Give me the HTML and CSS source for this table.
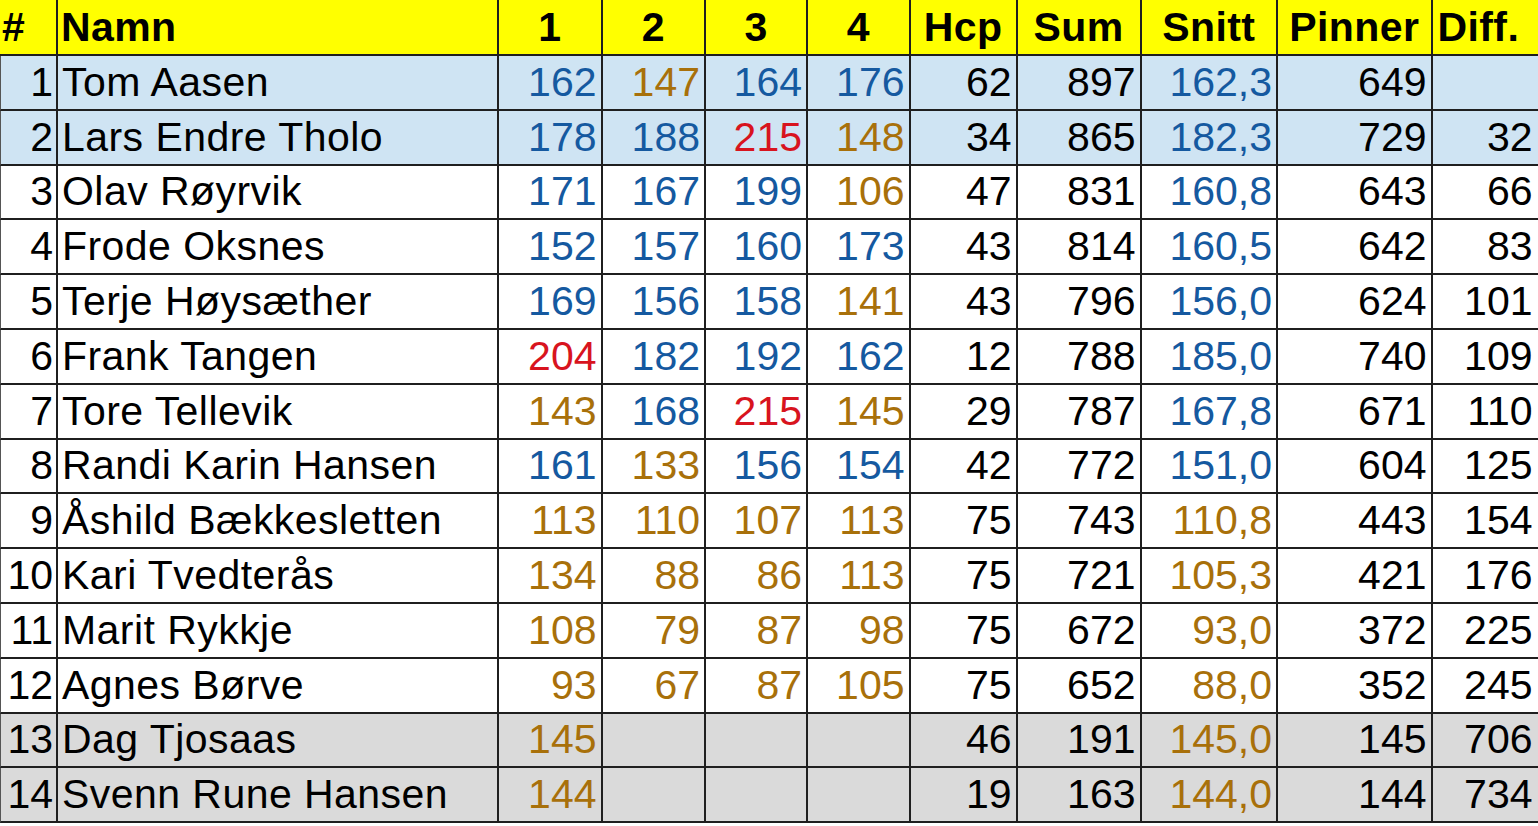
FILE: index.html
```html
<!DOCTYPE html>
<html lang="no">
<head>
<meta charset="utf-8">
<title>Resultatliste</title>
<link rel="stylesheet" href="styles.css">
</head>
<body>
<div class="table">
  <div class="row head">
    <div class="c l">#</div><div class="c l">Namn</div><div class="c m">1</div><div class="c m">2</div><div class="c m">3</div><div class="c m">4</div><div class="c m">Hcp</div><div class="c m">Sum</div><div class="c m">Snitt</div><div class="c m">Pinner</div><div class="c m">Diff.</div>
  </div>
  <div class="row blue">
    <div class="c">1</div><div class="c n">Tom Aasen</div><div class="c b">162</div><div class="c g">147</div><div class="c b">164</div><div class="c b">176</div><div class="c">62</div><div class="c">897</div><div class="c b">162,3</div><div class="c">649</div><div class="c"></div>
  </div>
  <div class="row blue">
    <div class="c">2</div><div class="c n">Lars Endre Tholo</div><div class="c b">178</div><div class="c b">188</div><div class="c r">215</div><div class="c g">148</div><div class="c">34</div><div class="c">865</div><div class="c b">182,3</div><div class="c">729</div><div class="c">32</div>
  </div>
  <div class="row">
    <div class="c">3</div><div class="c n">Olav Røyrvik</div><div class="c b">171</div><div class="c b">167</div><div class="c b">199</div><div class="c g">106</div><div class="c">47</div><div class="c">831</div><div class="c b">160,8</div><div class="c">643</div><div class="c">66</div>
  </div>
  <div class="row">
    <div class="c">4</div><div class="c n">Frode Oksnes</div><div class="c b">152</div><div class="c b">157</div><div class="c b">160</div><div class="c b">173</div><div class="c">43</div><div class="c">814</div><div class="c b">160,5</div><div class="c">642</div><div class="c">83</div>
  </div>
  <div class="row">
    <div class="c">5</div><div class="c n">Terje Høysæther</div><div class="c b">169</div><div class="c b">156</div><div class="c b">158</div><div class="c g">141</div><div class="c">43</div><div class="c">796</div><div class="c b">156,0</div><div class="c">624</div><div class="c">101</div>
  </div>
  <div class="row">
    <div class="c">6</div><div class="c n">Frank Tangen</div><div class="c r">204</div><div class="c b">182</div><div class="c b">192</div><div class="c b">162</div><div class="c">12</div><div class="c">788</div><div class="c b">185,0</div><div class="c">740</div><div class="c">109</div>
  </div>
  <div class="row">
    <div class="c">7</div><div class="c n">Tore Tellevik</div><div class="c g">143</div><div class="c b">168</div><div class="c r">215</div><div class="c g">145</div><div class="c">29</div><div class="c">787</div><div class="c b">167,8</div><div class="c">671</div><div class="c">110</div>
  </div>
  <div class="row">
    <div class="c">8</div><div class="c n">Randi Karin Hansen</div><div class="c b">161</div><div class="c g">133</div><div class="c b">156</div><div class="c b">154</div><div class="c">42</div><div class="c">772</div><div class="c b">151,0</div><div class="c">604</div><div class="c">125</div>
  </div>
  <div class="row">
    <div class="c">9</div><div class="c n">Åshild Bækkesletten</div><div class="c g">113</div><div class="c g">110</div><div class="c g">107</div><div class="c g">113</div><div class="c">75</div><div class="c">743</div><div class="c g">110,8</div><div class="c">443</div><div class="c">154</div>
  </div>
  <div class="row">
    <div class="c">10</div><div class="c n">Kari Tvedterås</div><div class="c g">134</div><div class="c g">88</div><div class="c g">86</div><div class="c g">113</div><div class="c">75</div><div class="c">721</div><div class="c g">105,3</div><div class="c">421</div><div class="c">176</div>
  </div>
  <div class="row">
    <div class="c">11</div><div class="c n">Marit Rykkje</div><div class="c g">108</div><div class="c g">79</div><div class="c g">87</div><div class="c g">98</div><div class="c">75</div><div class="c">672</div><div class="c g">93,0</div><div class="c">372</div><div class="c">225</div>
  </div>
  <div class="row">
    <div class="c">12</div><div class="c n">Agnes Børve</div><div class="c g">93</div><div class="c g">67</div><div class="c g">87</div><div class="c g">105</div><div class="c">75</div><div class="c">652</div><div class="c g">88,0</div><div class="c">352</div><div class="c">245</div>
  </div>
  <div class="row grey">
    <div class="c">13</div><div class="c n">Dag Tjosaas</div><div class="c g">145</div><div class="c"></div><div class="c"></div><div class="c"></div><div class="c">46</div><div class="c">191</div><div class="c g">145,0</div><div class="c">145</div><div class="c">706</div>
  </div>
  <div class="row grey">
    <div class="c">14</div><div class="c n">Svenn Rune Hansen</div><div class="c g">144</div><div class="c"></div><div class="c"></div><div class="c"></div><div class="c">19</div><div class="c">163</div><div class="c g">144,0</div><div class="c">144</div><div class="c">734</div>
  </div>
</div>
</body>
</html>
```

FILE: styles.css
```css
html, body {
  margin: 0;
  padding: 0;
  background: #ffffff;
}

body {
  width: 1538px;
  height: 826px;
  overflow: hidden;
  font-family: "Liberation Sans", Arial, sans-serif;
  color: #000;
}

.table {
  display: flex;
  flex-direction: column;
  width: 1538px;
  overflow: hidden;
}

.row {
  display: grid;
  grid-template-columns: 58px 441px 103.5px 103.5px 102px 102.5px 107px 124px 136.5px 154.5px 106px;
  height: 54.8px;
  background: #ffffff;
}

.row.head {
  height: 56px;
  background: #ffff00;
  font-weight: bold;
}

.row.blue {
  background: #cfe4f3;
}

.row.grey {
  background: #dadada;
}

.c {
  box-sizing: border-box;
  display: flex;
  align-items: center;
  justify-content: flex-end;
  padding: 0 4px 0 3px;
  border-right: 2px solid #1f1f1f;
  border-bottom: 2px solid #1f1f1f;
  font-size: 41px;
  line-height: 1;
  white-space: nowrap;
  overflow: hidden;
}

.c:last-child {
  border-right: none;
  padding-right: 6px;
}

.row:not(.head) .c:first-child {
  border-left: 1px solid #555;
  padding-right: 3px;
}

.head .c {
  font-size: 41px;
  letter-spacing: 0.4px;
}

.head .l {
  justify-content: flex-start;
  padding-left: 3px;
}

.head .c:first-child {
  padding-left: 2px;
}

.head .m {
  justify-content: center;
  padding: 0;
}

.head .c.m:last-child {
  justify-content: flex-start;
  padding-left: 5px;
}

.c.n {
  justify-content: flex-start;
  padding-left: 4px;
  letter-spacing: 0.45px;
}

.b { color: #1559a0; }
.g { color: #a8700a; }
.r { color: #d8141e; }
```
